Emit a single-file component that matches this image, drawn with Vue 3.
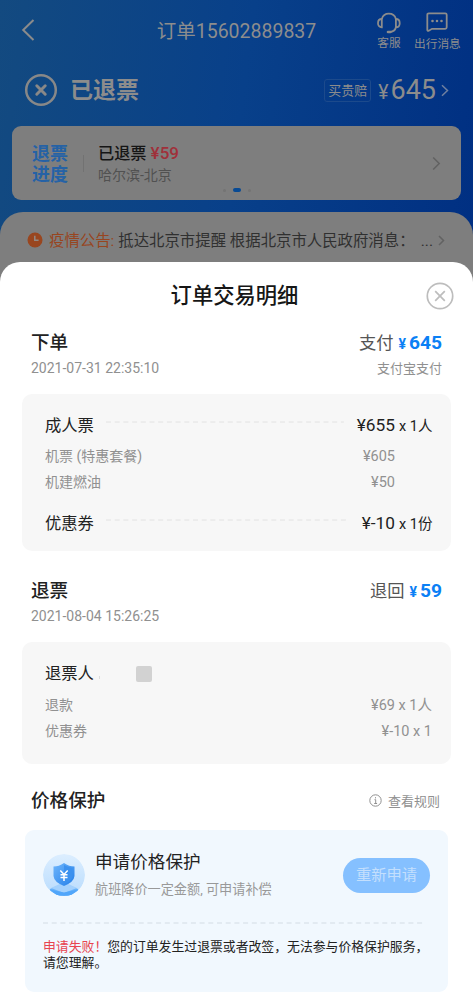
<script setup>
const orderItems = [
  { name: '成人票', price: '¥655', count: 'x 1人', main: true },
  { name: '机票 (特惠套餐)', price: '¥605', count: '' },
  { name: '机建燃油', price: '¥50', count: '' },
  { name: '优惠券', price: '¥-10', count: 'x 1份', main: true, spaced: true },
]
const refundItems = [
  { name: '退款', price: '¥69 x 1人' },
  { name: '优惠券', price: '¥-10 x 1' },
]
</script>

<template>
  <div class="screen">
    <header class="nav">
      <svg class="back" width="14" height="24" viewBox="0 0 14 24"><path d="M12.5 2 2.2 12l10.3 10" /></svg>
      <div class="nav-title">订单15602889837</div>
      <div class="action service">
        <svg width="24" height="22" viewBox="0 0 24 22">
          <path d="M4.8 6.500C5.800 3.200 8.400 1.200 11.800 1.200s6.200 2 7.100 5.300M18.900 14.800c-.6 2.800-2.700 4.300-5.600 4.700" />
          <path d="M4.800 6.500v8.300c-2.300 0-3.800-1.500-3.800-4.100s1.500-4.200 3.800-4.200zM18.900 6.500v8.300c2.300 0 3.800-1.500 3.800-4.100s-1.500-4.200-3.800-4.200z" />
          <path class="mic" d="M11 19.500h2.300" />
        </svg>
        <span>客服</span>
      </div>
      <div class="action message">
        <svg width="22" height="20" viewBox="0 0 22 20">
          <path d="M2.800 1.300h16.400q1.500 0 1.500 1.500v12.500q0 1.500-1.500 1.500H6l-3.200 1.900q-1.500.5-1.500-1V2.800q0-1.500 1.500-1.500z" />
          <path class="dots" d="M6.500 9h.01M11 9h.01M15.500 9h.01" />
        </svg>
        <span>出行消息</span>
      </div>
    </header>

    <section class="status">
      <svg class="status-icon" width="34" height="34" viewBox="0 0 34 34">
        <circle cx="17" cy="17" r="14.800" /><path d="m12.800 12.800 8.400 8.400m0-8.400-8.400 8.400" />
      </svg>
      <b>已退票</b>
      <span class="tag">买贵赔</span>
      <span class="yen">¥</span><span class="total">645</span>
      <svg class="chev" width="8" height="13" viewBox="0 0 8 13"><path d="m1 1.200 5.500 5.300L1 11.800" /></svg>
    </section>

    <section class="progress">
      <div class="stamp">退票<br>进度</div>
      <i class="bar"></i>
      <div class="progress-info">
        <div class="progress-title">已退票 <em>¥59</em></div>
        <div class="route">哈尔滨-北京</div>
      </div>
      <svg class="chev grey" width="9" height="15" viewBox="0 0 9 15"><path d="m1.200 1.500 6 6-6 6" /></svg>
      <div class="pager"><i></i><i class="on"></i><i></i></div>
    </section>

    <section class="notice">
      <svg width="16" height="16" viewBox="0 0 16 16"><circle cx="8" cy="8" r="7.500" fill="#99461f" /><path d="M7.800 3.800v4.500h3.800" fill="none" stroke="#928984" stroke-width="1.500" /></svg>
      <span class="notice-label">疫情公告:</span>
      <span class="notice-text">抵达北京市提醒 根据北京市人民政府消息：</span>
      <span class="more">...</span>
      <svg class="chev grey" width="7" height="11" viewBox="0 0 7 11"><path d="m1 1 4.500 4.500L1 10" /></svg>
    </section>

    <main class="sheet">
      <div class="sheet-head">
        <h1>订单交易明细</h1>
        <svg class="close" width="28" height="28" viewBox="0 0 28 28"><circle cx="14" cy="14" r="12.700" /><path d="m9.200 9.200 9.600 9.600m0-9.600-9.600 9.600" /></svg>
      </div>

      <div class="heading">
        <h2>下单</h2>
        <div class="amount">支付<small>¥</small><b>645</b></div>
      </div>
      <div class="meta"><span class="date">2021-07-31 22:35:10</span><span class="method">支付宝支付</span></div>

      <div class="card order">
        <div v-for="item in orderItems" :key="item.name" class="row" :class="{ main: item.main, spaced: item.spaced }">
          <span>{{ item.name }}</span>
          <svg v-if="item.main" class="leader" height="2"><line x1="0" y1="1" x2="100%" y2="1" /></svg>
          <span class="price">{{ item.price }}</span>
          <span class="count">{{ item.count }}</span>
        </div>
      </div>

      <div class="heading second">
        <h2>退票</h2>
        <div class="amount">退回<small>¥</small><b>59</b></div>
      </div>
      <div class="meta"><span class="date">2021-08-04 15:26:25</span></div>

      <div class="card refund">
        <div class="row main"><span>退票人</span><i class="speck"></i><i class="masked"></i></div>
        <div v-for="item in refundItems" :key="item.name" class="row">
          <span>{{ item.name }}</span><span class="price">{{ item.price }}</span>
        </div>
      </div>

      <div class="heading third">
        <h2>价格保护</h2>
        <div class="rules">
          <svg width="13" height="13" viewBox="0 0 13 13"><circle cx="6.500" cy="6.500" r="5.700" /><path d="M5.500 5.700h1.200v3.600M5.200 9.500h2.900M6.500 3.200v1.200" /></svg>
          查看规则
        </div>
      </div>

      <div class="protect">
        <div class="protect-top">
          <svg class="shield" width="42" height="42" viewBox="0 0 42 42">
            <defs>
              <linearGradient id="disc" x1="0" y1="0" x2="0" y2="1"><stop offset="0" stop-color="#dceeff" /><stop offset="1" stop-color="#b9dcfd" /></linearGradient>
              <linearGradient id="body" x1="0" y1="0" x2="1" y2="1"><stop offset="0" stop-color="#6db5fc" /><stop offset="1" stop-color="#237fe9" /></linearGradient>
              <clipPath id="round"><circle cx="21" cy="21" r="21" /></clipPath>
            </defs>
            <g clip-path="url(#round)">
              <circle cx="21" cy="21" r="21" fill="url(#disc)" />
              <path d="M7 35 21 29l14 6v2l-8 5H15l-8-5z" fill="#68b3fb" />
              <path d="m8 34 13-6 13 6-13 5z" fill="#a3d1fd" />
              <path d="m7 35.500 14 3 14-3-7 6H14z" fill="#51a6fa" />
            </g>
            <path d="M21 9q5 3.500 10.500 3.500v9.500Q31 28 21 32 11 28 10.500 22v-9.500Q16 12.500 21 9z" fill="url(#body)" />
            <path d="M21 11q4.500 2.800 8.600 2.800V22q-.5 5-8.600 8z" fill="#3b91ef" />
            <path d="m17.300 16.500 3.700 4 3.700-4M17.500 20.800h7M17.500 23.600h7M21 20.500v6.500" fill="none" stroke="#fff" stroke-width="1.500" />
          </svg>
          <div class="protect-copy"><h3>申请价格保护</h3><p>航班降价一定金额, 可申请补偿</p></div>
          <button>重新申请</button>
        </div>
        <svg class="divider" height="2"><line x1="0" y1="1" x2="100%" y2="1" /></svg>
        <p class="fail"><em>申请失败！</em>您的订单发生过退票或者改签，无法参与价格保护服务，<br>请您理解。</p>
      </div>
    </main>
  </div>
</template>

<style>
html, body { margin: 0; background: #fff; }
</style>

<style scoped>
* { box-sizing: border-box; }
h1, h2, h3, p { margin: 0; font-weight: 500; }
em, i { font-style: normal; }
svg { display: block; flex: none; fill: none; }
.screen {
  width: 473px; height: 1000px; overflow: hidden; white-space: nowrap;
  font-family: Roboto, "Noto Sans CJK SC", sans-serif; color: #222;
  background: linear-gradient(97deg, #134a80 0, #08408a 50%, #002f82 100%) 0 0 / 100% 290px no-repeat #fff;
}
.nav { position: relative; height: 62px; color: #8d8d8d; }
.back { position: absolute; left: 21px; top: 18px; stroke: #8b8b8b; stroke-width: 2; }
.nav-title { padding-top: 18px; line-height: 28px; text-align: center; font-size: 19.500px; }
.action { position: absolute; display: flex; flex-direction: column; align-items: center; font-size: 11.700px; line-height: 16px; }
.action svg { stroke: #8c8c8c; stroke-width: 1.800; }
.service { left: 377px; top: 12px; }
.service svg { height: 23px; }
.message { left: 414px; top: 12px; }
.message svg { height: 20px; margin-bottom: 4px; }
.mic, .dots { stroke-width: 2.600; stroke-linecap: round; }
.status { display: flex; align-items: center; height: 56px; padding: 0 24px; color: #8c8c8c; }
.status b { margin: 1px 0 0 12px; font-size: 23px; font-weight: 700; line-height: 30px; }
.status-icon { stroke: #888; stroke-width: 2.500; stroke-linecap: round; }
.status-icon path { stroke-width: 3; }
.tag { margin-left: auto; padding: 0 3px; height: 23px; border: 1px solid #1c4a8c; border-radius: 3px; font-size: 13px; line-height: 21px; }
.yen { margin: 5px 0 0 7px; font-size: 19.500px; }
.total { margin-left: 2px; font-size: 27px; }
.chev { stroke: #7080a0; stroke-width: 1.500; }
.status .chev { margin-left: 5px; }
.grey { stroke: #626262; }
.progress { position: relative; display: flex; align-items: center; height: 74px; margin: 8px 12px 0; padding: 0 20px 0 20px; border-radius: 9px; background: #7e7e7e; }
.stamp { margin-top: 2px; font-size: 18px; line-height: 21px; font-weight: 700; color: #2562a6; }
.bar { width: 1px; height: 17px; margin-left: 15px; background: #727272; }
.progress-info { margin: 1px auto 0 14px; }
.progress-title { font-size: 16.200px; line-height: 23px; color: #151515; font-weight: 500; }
.progress-title em { font-size: 17px; color: #a0303a; }
.route { font-size: 14px; line-height: 20px; color: #515151; }
.pager { position: absolute; left: 211px; bottom: 8px; display: flex; gap: 7px; align-items: center; }
.pager i { width: 3px; height: 3px; border-radius: 2px; background: #747474; }
.pager .on { width: 8px; height: 4px; background: #084a94; }
.notice { display: flex; align-items: flex-start; height: 74px; margin-top: 12px; padding: 18px 28px 0 27px; border-radius: 23px 23px 0 0; background: #7e7e7e; font-size: 15.400px; line-height: 23px; }
.notice > svg { margin-top: 2px; }
.notice-label { margin-left: 6px; color: #98451f; }
.notice-text { margin-left: 4px; color: #303030; }
.more { margin-left: auto; color: #303030; }
.notice .chev { margin: 5px 0 0 5px; }
.sheet { position: relative; height: 738px; margin-top: -24px; border-radius: 20px 20px 0 0; background: #fff; padding-top: 18px; }
.sheet-head { position: relative; height: 32px; padding-right: 4px; text-align: center; }
h1 { font-size: 21.300px; line-height: 32px; color: #161616; }
.close { position: absolute; right: 19px; top: 2px; stroke: #bdbdbd; stroke-width: 1.700; }
.heading { display: flex; align-items: center; justify-content: space-between; height: 28px; margin: 17px 31px 0; }
h2 { font-size: 18.600px; line-height: 28px; }
.amount { font-size: 17.300px; line-height: 28px; color: #555; }
.amount small { margin: 0 3px 0 5px; font-size: 14px; font-weight: 700; color: #0b80f5; }
.amount b { font-size: 19.200px; font-weight: 700; color: #0b80f5; }
.meta { display: flex; align-items: center; justify-content: space-between; height: 22px; margin: 0 31px; font-size: 13px; color: #909090; }
.date { font-size: 14px; }
.method { padding-bottom: 2px; }
.card { margin: 15px 22px 0; border-radius: 10px; background: #f7f7f7; padding-left: 23px; }
.order { height: 157px; padding-top: 17px; }
.row { display: flex; align-items: baseline; height: 26px; line-height: 26px; font-size: 14px; color: #919191; }
.row.main { height: 32px; line-height: 28px; font-size: 16.300px; color: #222; }
.row.spaced { margin-top: 14px; }
.leader { flex: 1; align-self: flex-start; width: 0; margin: 10px 13px 0 12px; }
.leader line, .divider line { stroke: #e2e2e2; stroke-width: 1; stroke-dasharray: 5 3.700; }
.price { margin-left: auto; font-size: 14.500px; }
.main .price { margin-left: 0; font-size: 17.300px; }
.count { width: 56px; padding-left: 4px; font-size: 14.500px; }
.second { margin-top: 26px; }
.refund { height: 122px; padding: 18px 19px 0 23px; }
.speck { width: 1px; height: 3px; margin-left: 5px; background: #ddd; }
.masked { width: 16px; height: 16px; margin: 6px 0 0 36px; border-radius: 2px; background: #d2d2d2; align-self: flex-start; }
.third { margin-top: 23px; }
.rules { display: flex; align-items: center; gap: 6px; margin: 0 2px 2px 0; font-size: 13px; color: #909090; }
.rules svg { stroke: #909090; stroke-width: 1; }
.protect { height: 162px; margin: 15px 25px 0; padding: 19px 18px 0; border-radius: 9px; background: #f1f8fe; }
.protect-top { display: flex; height: 73px; }
.shield { margin-top: 5px; }
.protect-copy { margin-left: 10px; }
h3 { font-size: 17.600px; font-weight: 400; line-height: 27px; }
.protect-copy p { margin-top: 4px; font-size: 13.150px; font-weight: 400; line-height: 20px; color: #999; }
button { width: 87px; height: 35px; margin: 8.500px 0 0 auto; padding: 0; border: 0; border-radius: 18px; background: #85c0ff; color: #c3dffd; font: inherit; font-size: 15.300px; line-height: 35px; }
.divider { width: 380px; }
.divider line { stroke: #d3dce4; }
.fail { margin-top: 15px; font-size: 12.850px; font-weight: 400; line-height: 16px; }
.fail em { color: #e8444f; }
</style>
